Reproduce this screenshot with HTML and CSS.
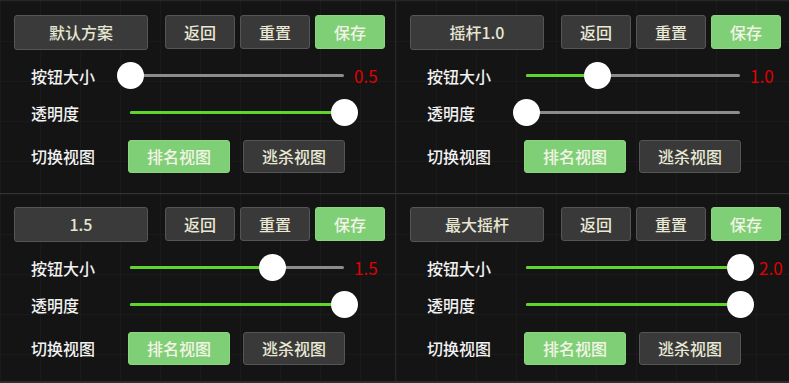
FILE: index.html
```html
<!DOCTYPE html>
<html lang="zh-CN">
<head>
    <meta charset="UTF-8">
    <title>按钮设置</title>
    <link rel="stylesheet" href="styles.css">
</head>
<body>

<div class="board">
    <div class="panel">
        <div class="header">
            <div class="name">默认方案</div>
            <button class="btn">返回</button>
            <button class="btn">重置</button>
            <button class="btn on">保存</button>
        </div>
        <div class="row">
            <span class="label">按钮大小</span>
            <div class="track"><div class="fill" style="width: 0%"></div><div class="thumb" style="left: 0%"></div></div>
            <span class="value">0.5</span>
        </div>
        <div class="row">
            <span class="label">透明度</span>
            <div class="track"><div class="fill" style="width: 100%"></div><div class="thumb" style="left: 100%"></div></div>
        </div>
        <div class="row views">
            <span class="label">切换视图</span>
            <button class="view on">排名视图</button>
            <button class="view">逃杀视图</button>
        </div>
    </div>

    <div class="panel">
        <div class="header">
            <div class="name">摇杆1.0</div>
            <button class="btn">返回</button>
            <button class="btn">重置</button>
            <button class="btn on">保存</button>
        </div>
        <div class="row">
            <span class="label">按钮大小</span>
            <div class="track"><div class="fill" style="width: 33.3%"></div><div class="thumb" style="left: 33.3%"></div></div>
            <span class="value">1.0</span>
        </div>
        <div class="row">
            <span class="label">透明度</span>
            <div class="track"><div class="fill" style="width: 0%"></div><div class="thumb" style="left: 0%"></div></div>
        </div>
        <div class="row views">
            <span class="label">切换视图</span>
            <button class="view on">排名视图</button>
            <button class="view">逃杀视图</button>
        </div>
    </div>

    <div class="panel">
        <div class="header">
            <div class="name">1.5</div>
            <button class="btn">返回</button>
            <button class="btn">重置</button>
            <button class="btn on">保存</button>
        </div>
        <div class="row">
            <span class="label">按钮大小</span>
            <div class="track"><div class="fill" style="width: 66.7%"></div><div class="thumb" style="left: 66.7%"></div></div>
            <span class="value">1.5</span>
        </div>
        <div class="row">
            <span class="label">透明度</span>
            <div class="track"><div class="fill" style="width: 100%"></div><div class="thumb" style="left: 100%"></div></div>
        </div>
        <div class="row views">
            <span class="label">切换视图</span>
            <button class="view on">排名视图</button>
            <button class="view">逃杀视图</button>
        </div>
    </div>

    <div class="panel">
        <div class="header">
            <div class="name">最大摇杆</div>
            <button class="btn">返回</button>
            <button class="btn">重置</button>
            <button class="btn on">保存</button>
        </div>
        <div class="row">
            <span class="label">按钮大小</span>
            <div class="track"><div class="fill" style="width: 100%"></div><div class="thumb" style="left: 100%"></div></div>
            <span class="value max">2.0</span>
        </div>
        <div class="row">
            <span class="label">透明度</span>
            <div class="track"><div class="fill" style="width: 100%"></div><div class="thumb" style="left: 100%"></div></div>
        </div>
        <div class="row views">
            <span class="label">切换视图</span>
            <button class="view on">排名视图</button>
            <button class="view">逃杀视图</button>
        </div>
    </div>
</div>

</body>
</html>
```

FILE: styles.css
```css
body {
    margin: 0;
    background: #141414;
    font-family: "Noto Sans CJK SC", "Noto Sans", sans-serif;
    color: #f2f2f2;
}

.board {
    display: grid;
    grid-template-columns: 396px 393px;
    grid-template-rows: 193px 190px;
    width: 789px;
    height: 383px;
}

.panel {
    box-sizing: border-box;
    padding: 14px 0 0 14px;
    background-color: #141414;
    background-image:
        linear-gradient(to right, rgba(255, 255, 255, 0.025) 1px, transparent 1px),
        linear-gradient(to bottom, rgba(255, 255, 255, 0.025) 1px, transparent 1px);
    background-size: 40px 40px;
    border-top: 1px solid #262626;
}

.panel:nth-child(odd) {
    border-right: 1px solid #262626;
}

.panel:nth-child(n+3) {
    padding-top: 13px;
    border-top: 1px solid #333;
    border-bottom: 2px solid #2c2c2c;
}

.header {
    display: flex;
    align-items: flex-start;
    height: 35px;
}

.name {
    box-sizing: border-box;
    width: 134px;
    height: 35px;
    margin-right: 17px;
    background: #3a3a3a;
    border: 1px solid #555;
    border-radius: 3px;
    color: #e6e6d2;
    font-size: 16px;
    font-weight: 500;
    line-height: 33px;
    text-align: center;
}

button {
    font-family: inherit;
    cursor: pointer;
}

.btn {
    box-sizing: border-box;
    width: 70px;
    height: 34px;
    margin-right: 5px;
    padding: 0;
    background: #393939;
    border: 1px solid #555;
    border-radius: 3px;
    color: #e8e8d4;
    font-size: 16px;
    font-weight: 500;
}

.btn.on,
.view.on {
    background: #7fcf76;
    border-color: #8ad680;
    color: #f4f4e6;
}

.row {
    display: flex;
    align-items: center;
    height: 37px;
    padding-left: 17px;
}

.row:nth-child(2) {
    margin-top: 7px;
}

.label {
    width: 99px;
    font-size: 16px;
    font-weight: 500;
}

.track {
    position: relative;
    width: 214px;
    height: 3px;
    background: #8c8c8c;
    border-radius: 2px;
}

.fill {
    height: 100%;
    background: #5fd62a;
    border-radius: 2px;
}

.thumb {
    position: absolute;
    top: 50%;
    width: 27px;
    height: 27px;
    margin: -13.5px 0 0 -13.5px;
    background: #fff;
    border-radius: 50%;
}

.value {
    margin-left: 10px;
    color: #e00000;
    font-size: 17px;
}

.value.max {
    margin-left: 19px;
}

.views {
    height: 32px;
    margin-top: 9px;
}

.views .label {
    width: 97px;
}

.view {
    box-sizing: border-box;
    width: 102px;
    height: 33px;
    margin-right: 13px;
    padding: 0;
    background: #393939;
    border: 1px solid #555;
    border-radius: 3px;
    color: #e8e8d4;
    font-size: 16px;
    font-weight: 500;
}
```
